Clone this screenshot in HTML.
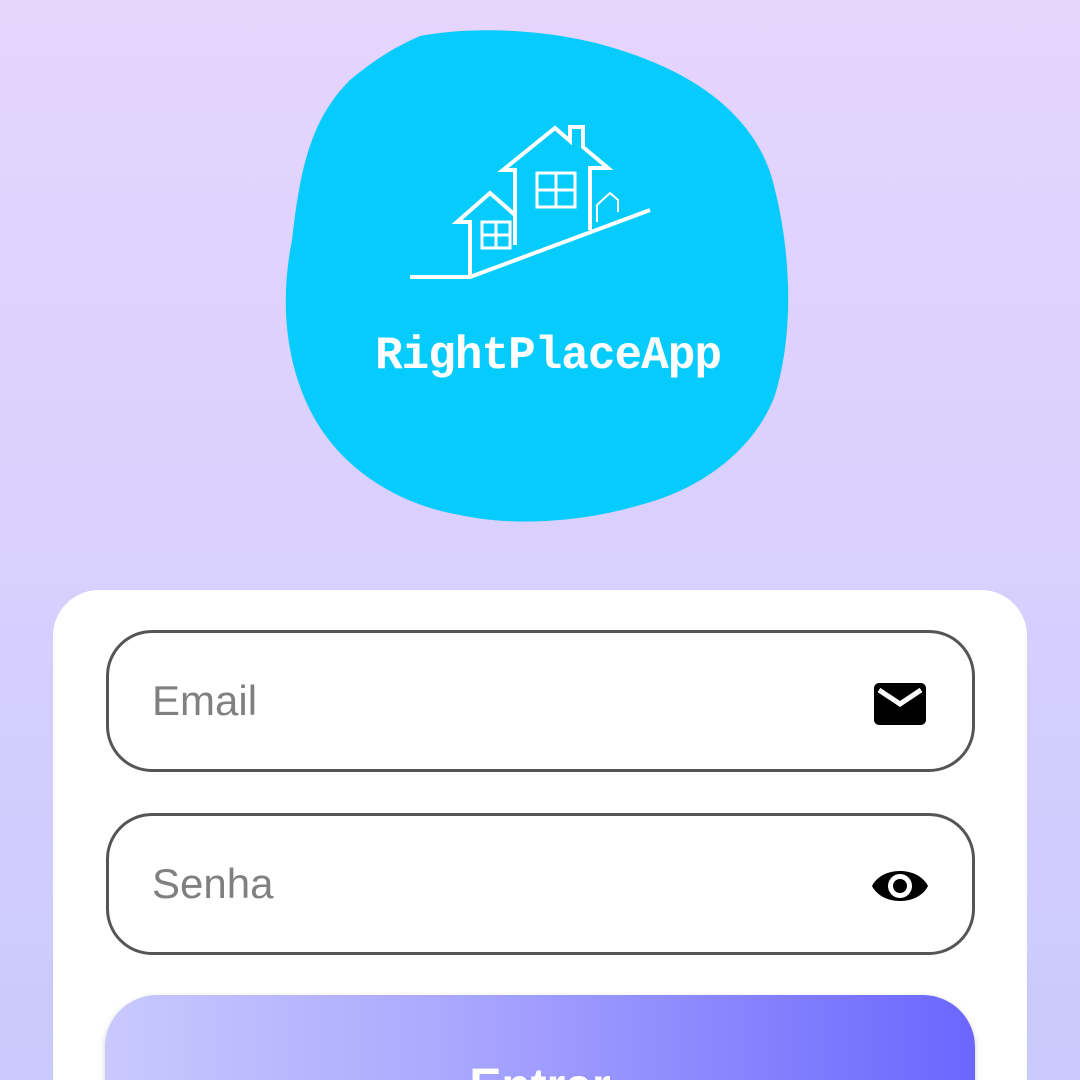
<!DOCTYPE html>
<html><head><style>
html,body{margin:0;padding:0;width:1080px;height:1080px;overflow:hidden;
background:linear-gradient(180deg,#e6d5fd 0%,#d9d0fd 50%,#cac9fd 100%);font-family:"Liberation Sans",sans-serif;}
.card{position:absolute;left:53px;top:590px;width:974px;height:490px;background:#fff;border-radius:46px 46px 0 0;}
.inp{position:absolute;left:106px;width:863px;height:136px;border:3px solid #555;border-radius:46px;box-sizing:content-box;}
.inp span{position:absolute;left:43px;top:44px;font-size:42px;color:#808080;}
.btn{position:absolute;left:105px;top:995px;width:870px;height:85px;border-radius:52px 52px 0 0;overflow:hidden;
background:linear-gradient(90deg,#c9c9fe,#a9a8fe 40%,#6b66fe);box-shadow:0 2px 6px rgba(0,0,0,.2);}
.btn span{position:absolute;left:0;right:0;top:64px;text-align:center;color:#fff;font-weight:bold;font-size:48px;}
</style></head><body>
<svg width="1080" height="560" style="position:absolute;left:0;top:0">
<path fill="#06cbfd" d="M420,36 C480,25 560,30 620,50 C700,75 760,120 775,190 C790,250 795,330 775,395 C755,450 700,490 640,505 C590,520 520,528 460,515 C400,505 340,470 310,410 C285,360 280,300 292,240 C300,170 310,120 350,80 C380,55 400,45 420,36 Z"/>
<g fill="none" stroke="#fff" stroke-width="4">
<path d="M410,277 H470 L650,210"/>
<path d="M470,277 V222 H457 L490,193 L515,215 M515,245 V170 H503 L555,128 L570,141 V127 H583 V147 L608,168 H590 V230"/>
<rect x="537" y="173" width="38" height="34" stroke-width="3"/>
<path d="M556,173 V207 M537,190 H575" stroke-width="3"/>
<rect x="482" y="222" width="28" height="26" stroke-width="3"/>
<path d="M496,222 V248 M482,235 H510" stroke-width="3"/>
<path d="M597,222 V205 L610,193 L618,200 V212" stroke-width="2"/>
</g>
<text x="548" y="368" text-anchor="middle" fill="#fff" font-family="Liberation Mono,monospace" font-weight="bold" font-size="46" letter-spacing="-1">RightPlaceApp</text>
</svg>
<div class="card"></div>
<div class="inp" style="top:630px"><span>Email</span>
<svg style="position:absolute;left:763px;top:48px" width="56" height="46" viewBox="0 0 56 46"><rect x="2" y="2" width="52" height="42" rx="5" fill="#000"/><path d="M7,9 L28,23 L49,9" stroke="#fff" stroke-width="5" fill="none"/></svg></div>
<div class="inp" style="top:813px"><span>Senha</span>
<svg style="position:absolute;left:761px;top:48px" width="60" height="44" viewBox="0 0 60 44"><path d="M2,22 C12,2 48,2 58,22 C48,42 12,42 2,22 Z" fill="#000"/><circle cx="30" cy="22" r="12" fill="#fff"/><circle cx="30" cy="22" r="7" fill="#000"/></svg></div>
<div class="btn"><span>Entrar</span></div>
</body></html>
